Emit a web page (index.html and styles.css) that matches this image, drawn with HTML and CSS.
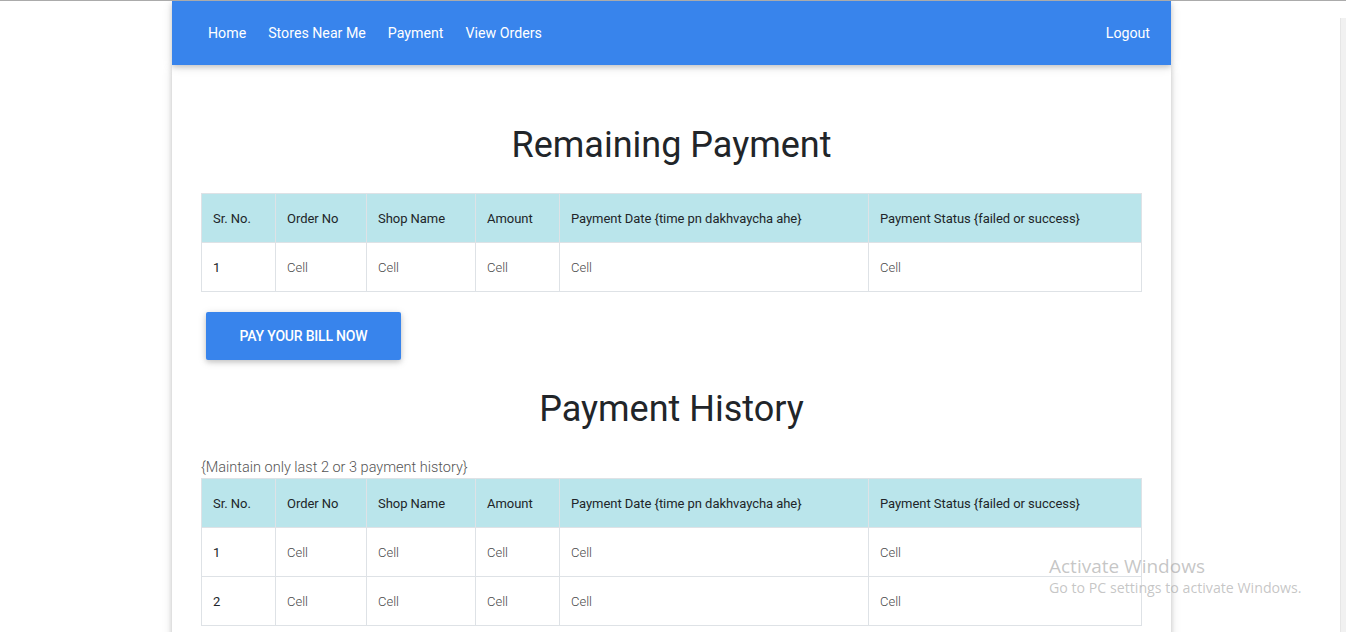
FILE: index.html
```html
<!DOCTYPE html>
<html>
<head>
<meta charset="utf-8">
<link rel="stylesheet" href="styles.css">
</head>
<body>
<div class="page">
  <div class="shell">
    <nav class="navbar">
      <ul class="nav-left">
        <li><a href="#">Home</a></li>
        <li><a href="#">Stores Near Me</a></li>
        <li><a href="#">Payment</a></li>
        <li><a href="#">View Orders</a></li>
      </ul>
      <a href="#" class="logout">Logout</a>
    </nav>
    <main class="card">
      <h1 class="title first">Remaining Payment</h1>
      <table class="tbl">
        <thead>
          <tr>
            <th class="c1">Sr. No.</th><th class="c2">Order No</th><th class="c3">Shop Name</th><th class="c4">Amount</th><th class="c5">Payment Date {time pn dakhvaycha ahe}</th><th>Payment Status {failed or success}</th>
          </tr>
        </thead>
        <tbody>
          <tr><td class="num">1</td><td>Cell</td><td>Cell</td><td>Cell</td><td>Cell</td><td>Cell</td></tr>
        </tbody>
      </table>
      <div class="btn-row"><button class="btn">Pay your bill now</button></div>
      <h1 class="title second">Payment History</h1>
      <p class="note">{Maintain only last 2 or 3 payment history}</p>
      <table class="tbl">
        <thead>
          <tr>
            <th class="c1">Sr. No.</th><th class="c2">Order No</th><th class="c3">Shop Name</th><th class="c4">Amount</th><th class="c5">Payment Date {time pn dakhvaycha ahe}</th><th>Payment Status {failed or success}</th>
          </tr>
        </thead>
        <tbody>
          <tr><td class="num">1</td><td>Cell</td><td>Cell</td><td>Cell</td><td>Cell</td><td>Cell</td></tr>
          <tr><td class="num">2</td><td>Cell</td><td>Cell</td><td>Cell</td><td>Cell</td><td>Cell</td></tr>
        </tbody>
      </table>
    </main>
  </div>
</div>
<div class="scrollbar"></div>
<div class="watermark">
  <div class="wm1">Activate Windows</div>
  <div class="wm2">Go to PC settings to activate Windows.</div>
</div>
</body>
</html>
```
FILE: styles.css
```css
html, body {
  margin: 0;
  padding: 0;
  height: 100%;
  overflow: hidden;
  background: #fff;
}
body {
  font-family: Roboto, "Liberation Sans", sans-serif;
  color: #212529;
  border-top: 1px solid #ababab;
  box-sizing: border-box;
}
.page {
  padding-left: 172px;
}
.shell {
  width: 999px;
}
.navbar {
  height: 64px;
  background: #3884ec;
  display: flex;
  align-items: center;
  justify-content: space-between;
  padding: 0 21px 0 36px;
  box-sizing: border-box;
  position: relative;
  z-index: 2;
  box-shadow: 0 2px 5px rgba(0,0,0,0.16), 0 2px 10px rgba(0,0,0,0.12);
}
.nav-left {
  list-style: none;
  margin: 0;
  padding: 0;
  display: flex;
  gap: 22px;
  line-height: 16px;
}
.nav-left li {
  display: block;
}
.navbar a {
  display: block;
  color: #fff;
  text-decoration: none;
  font-size: 14.2px;
  line-height: 16px;
}
.card {
  background: #fff;
  box-shadow: 0 2px 5px rgba(0,0,0,0.16), 0 2px 10px rgba(0,0,0,0.12);
  padding: 0 29px 40px;
  min-height: 700px;
}
.title {
  font-weight: 400;
  font-size: 36px;
  line-height: 43px;
  text-align: center;
  margin: 0;
}
.title.first {
  padding-top: 59px;
  padding-bottom: 26px;
}
.title.second {
  padding-top: 28px;
  padding-bottom: 29px;
}
.tbl {
  width: 941px;
  border-collapse: collapse;
  font-size: 13px;
}
.tbl th, .tbl td {
  border: 1px solid #dee2e6;
  padding: 0 11px;
  height: 48px;
  text-align: left;
  vertical-align: middle;
}
.tbl thead tr {
  background: #bae5eb;
}
.tbl th {
  font-weight: 400;
  color: #212529;
  letter-spacing: -0.05px;
}
.tbl td {
  font-weight: 300;
  color: #4a4a4a;
}
.tbl td.num {
  font-weight: 400;
  color: #212529;
}
.c1 { width: 51px; }
.c2 { width: 68px; }
.c3 { width: 86px; }
.c4 { width: 61px; }
.c5 { width: 286px; }
.btn-row {
  padding: 20px 0 0 5px;
}
.btn {
  width: 195px;
  height: 48px;
  border: none;
  border-radius: 2px;
  background: #3884ec;
  color: #fff;
  font-family: Roboto, "Liberation Sans", sans-serif;
  font-size: 14px;
  font-weight: 500;
  text-transform: uppercase;
  box-shadow: 0 2px 5px rgba(0,0,0,0.16), 0 2px 10px rgba(0,0,0,0.12);
  letter-spacing: -0.2px;
}
.note {
  margin: 0 0 2px;
  font-size: 14.5px;
  font-weight: 300;
  color: #555;
  line-height: 16px;
}
.scrollbar {
  position: absolute;
  right: 0;
  top: 18px;
  width: 5px;
  bottom: 0;
  background: #f1f1f1;
  border-left: 1px solid #e6e6e6;
}
.watermark {
  position: absolute;
  left: 1049px;
  top: 554px;
  font-family: "Open Sans", "Noto Sans", sans-serif;
  color: rgba(160,160,160,0.6);
  pointer-events: none;
}
.wm1 {
  font-size: 19px;
  line-height: 24px;
}
.wm2 {
  font-size: 14.2px;
  line-height: 20px;
}
```
